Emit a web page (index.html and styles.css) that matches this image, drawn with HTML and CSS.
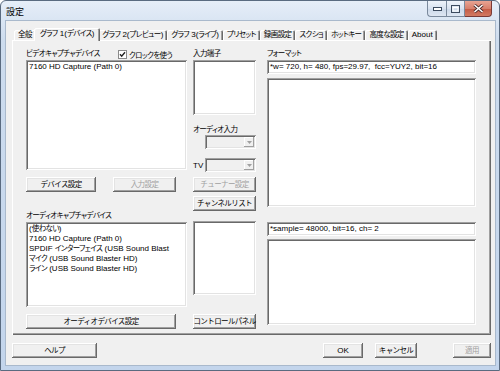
FILE: index.html
```html
<!DOCTYPE html>
<html lang="ja">
<head>
    <meta charset="UTF-8">
    <title>設定</title>
    <link rel="stylesheet" href="styles.css">
</head>
<body>
    <div class="window">
        <div class="titlebar">
            <span class="title">設定</span>
            <div class="caption">
                <span class="cap cap-min">
                    <svg width="9" height="4" viewBox="0 0 9 4"><rect x="0.5" y="0.5" width="8" height="3" fill="#fff" stroke="#3b4a5e"/></svg>
                </span>
                <span class="cap cap-max">
                    <svg width="9" height="8" viewBox="0 0 9 8"><rect x="0.5" y="0.5" width="8" height="7" fill="none" stroke="#3b4a5e"/><rect x="2" y="2.5" width="5" height="3.5" fill="none" stroke="#fff"/></svg>
                </span>
                <span class="cap cap-close">
                    <svg width="11" height="9" viewBox="0 0 11 9"><path d="M1.5 1 L9.5 8 M9.5 1 L1.5 8" stroke="#4a2a2a" stroke-width="3.2"/><path d="M1.5 1 L9.5 8 M9.5 1 L1.5 8" stroke="#fff" stroke-width="1.6"/></svg>
                </span>
            </div>
        </div>

        <div class="client">
            <div class="tabs">
                <span class="tab"><span class="ja">全般</span></span>
                <span class="tab active"><span class="ja">グラフ</span> 1(<span class="ja">デバイス</span>)</span>
                <span class="tab"><span class="ja">グラフ</span> 2(<span class="ja">プレビュー</span>)</span>
                <span class="tab"><span class="ja">グラフ</span> 3(<span class="ja">ライブ</span>)</span>
                <span class="tab"><span class="ja">プリセット</span></span>
                <span class="tab"><span class="ja">録画設定</span></span>
                <span class="tab"><span class="ja">スクショ</span></span>
                <span class="tab"><span class="ja">ホットキー</span></span>
                <span class="tab"><span class="ja">高度な設定</span></span>
                <span class="tab">About</span>
            </div>

            <div class="panel">
                <!-- 左: キャプチャデバイス -->
                <div class="col col-left">
                    <div class="head-row">
                        <span class="label ja">ビデオキャプチャデバイス</span>
                        <span class="check">
                            <svg class="check-box" width="9" height="9" viewBox="0 0 9 9">
                                <rect x="0.5" y="0.5" width="8" height="8" fill="#fff" stroke="#8a8a8a"/>
                                <path d="M2 4.2 L3.7 6.2 L7 2.2" fill="none" stroke="#222" stroke-width="1.4"/>
                            </svg>
                            <span class="ja">クロックを使う</span>
                        </span>
                    </div>
                    <div class="list sunken list-video">
                        <div class="item">7160 HD Capture (Path 0)</div>
                    </div>
                    <div class="btn-row">
                        <button class="btn btn-device ja">デバイス設定</button>
                        <button class="btn btn-input ja" disabled>入力設定</button>
                    </div>
                    <div class="label label-audio ja">オーディオキャプチャデバイス</div>
                    <div class="list sunken list-audio">
                        <div class="item">(<span class="ja">使わない</span>)</div>
                        <div class="item">7160 HD Capture (Path 0)</div>
                        <div class="item">SPDIF <span class="ja">インターフェイス</span> (USB Sound Blast</div>
                        <div class="item"><span class="ja">マイク</span> (USB Sound Blaster HD)</div>
                        <div class="item"><span class="ja">ライン</span> (USB Sound Blaster HD)</div>
                    </div>
                    <button class="btn btn-audio ja">オーディオデバイス設定</button>
                </div>

                <!-- 中: 入力端子 -->
                <div class="col col-mid">
                    <div class="label ja">入力端子</div>
                    <div class="list sunken list-pins"></div>
                    <div class="label label-ain ja">オーディオ入力</div>
                    <div class="combo sunken combo-ain">
                        <span class="combo-arrow"><svg width="5" height="3" viewBox="0 0 5 3"><path d="M0 0 H5 L2.5 3 Z" fill="#a0a0a0"/></svg></span>
                    </div>
                    <div class="tv-row">
                        <span class="tv-label">TV</span>
                        <div class="combo sunken">
                            <span class="combo-arrow"><svg width="5" height="3" viewBox="0 0 5 3"><path d="M0 0 H5 L2.5 3 Z" fill="#a0a0a0"/></svg></span>
                        </div>
                    </div>
                    <button class="btn btn-tuner ja" disabled>チューナー設定</button>
                    <button class="btn btn-channel ja">チャンネルリスト</button>
                    <div class="list sunken list-apins"></div>
                    <button class="btn btn-control ja">コントロールパネル</button>
                </div>

                <!-- 右: フォーマット -->
                <div class="col col-right">
                    <div class="label ja">フォーマット</div>
                    <div class="edit sunken">*w= 720, h= 480, fps=29.97,&nbsp; fcc=YUY2, bit=16</div>
                    <div class="list sunken list-vformat"></div>
                    <div class="edit sunken edit-audio">*sample= 48000, bit=16, ch= 2</div>
                    <div class="list sunken list-aformat"></div>
                </div>
            </div>

            <div class="footer">
                <button class="btn btn-help ja">ヘルプ</button>
                <button class="btn btn-ok">OK</button>
                <button class="btn btn-cancel ja">キャンセル</button>
                <button class="btn btn-apply ja" disabled>適用</button>
            </div>
        </div>
    </div>
</body>
</html>
```

FILE: styles.css
```css
* {
    box-sizing: border-box;
}

body {
    margin: 0;
    font-family: "Liberation Sans", "Noto Sans CJK JP", sans-serif;
    font-size: 8px;
    font-feature-settings: "palt";
    color: #000;
    background: #fff;
}

.window {
    width: 500px;
    height: 371px;
    display: flex;
    flex-direction: column;
    border: 1px solid #5a6b80;
    border-radius: 6px 6px 0 0;
    background: linear-gradient(#e6eef8, #cddcee 40px, #c3d5ec);
    padding: 0 4px 5px 5px;
}

.titlebar {
    height: 20px;
    display: flex;
    align-items: flex-start;
}

.title {
    font-size: 9px;
    line-height: 10px;
    margin-top: 6px;
}

.caption {
    margin-left: auto;
    margin-right: 3px;
    display: flex;
}

.cap {
    height: 16px;
    display: flex;
    align-items: center;
    justify-content: center;
    border: 1px solid #7a899c;
    border-top: none;
    background: linear-gradient(#eef3fa, #d8e2ef 50%, #cbd8e9 51%, #dde6f2);
}

.cap-min {
    width: 19px;
    border-radius: 0 0 0 4px;
    border-right: none;
}

.cap-max {
    width: 19px;
}

.cap-close {
    width: 27px;
    border-radius: 0 0 4px 0;
    border-left: none;
    border-color: #7a3a36;
    background: linear-gradient(#e8a493, #d7806c 50%, #c45a44 51%, #d27a62);
}

.client {
    flex: 1;
    display: flex;
    flex-direction: column;
    background: #f0f0f0;
    padding: 7px 4px 0 6px;
    box-shadow: 0 0 0 1px #a9b9cc;
}

/* タブ */
.tabs {
    height: 12px;
    display: flex;
    align-items: flex-end;
    padding-left: 2px;
}

.tab {
    height: 10px;
    line-height: 10px;
    padding: 0 4px;
    white-space: nowrap;
    background: #f0f0f0;
    border-radius: 2px 2px 0 0;
    box-shadow: inset 1px 1px #fff, inset -1px 0 #696969, inset -2px 0 #a0a0a0;
}

.tab.active {
    position: relative;
    z-index: 1;
    height: 13px;
    margin: 0 -2px -1px;
    padding: 1px 6px 0;
}

.panel {
    height: 295px;
    display: flex;
    padding: 8px 0 0 14px;
    box-shadow: inset 1px 1px #fff, inset -1px -1px #696969, inset -2px -2px #a0a0a0;
}

.col {
    display: flex;
    flex-direction: column;
}

.col-left {
    width: 161px;
}

.col-mid {
    width: 63px;
    margin-left: 6px;
}

.col-right {
    width: 209px;
    margin-left: 11px;
}

.label {
    line-height: 12px;
    white-space: nowrap;
}

.sunken {
    background: #fff;
    box-shadow: inset 1px 1px #a0a0a0, inset -1px -1px #fff, inset 2px 2px #696969, inset -2px -2px #e3e3e3;
}

.list {
    padding: 2px 3px;
    overflow: hidden;
}

.item {
    line-height: 10px;
    white-space: nowrap;
}

.btn {
    height: 15px;
    padding: 0;
    border: none;
    font-family: inherit;
    font-size: 8px;
    line-height: 14px;
    white-space: nowrap;
    color: #000;
    background: #f0f0f0;
    box-shadow: inset -1px -1px #696969, inset 1px 1px #fff, inset -2px -2px #a0a0a0, inset 2px 2px #e3e3e3;
}

.btn:disabled {
    color: #a0a0a0;
}

/* 左列 */
.head-row {
    height: 12px;
    display: grid;
    grid-template-columns: 92px auto;
    align-items: center;
}

.check {
    display: flex;
    align-items: center;
    gap: 2px;
    white-space: nowrap;
}

.list-video {
    height: 110px;
}

.btn-row {
    display: flex;
    margin-top: 7px;
}

.btn-device {
    width: 70px;
}

.btn-input {
    width: 63px;
    margin-left: 17px;
}

.label-audio {
    margin-top: 18px;
}

.list-audio {
    height: 85px;
}

.btn-audio {
    width: 150px;
    margin-top: 7px;
}

/* 中列 */
.list-pins {
    height: 55px;
}

.label-ain {
    margin-top: 10px;
    line-height: 10px;
}

.combo {
    width: 51px;
    height: 14px;
    background: #f0f0f0;
    display: flex;
    justify-content: flex-end;
    padding: 2px;
}

.combo-ain {
    margin-left: 12px;
}

.combo-arrow {
    width: 10px;
    display: flex;
    align-items: center;
    justify-content: center;
    box-shadow: inset -1px -1px #a0a0a0, inset 1px 1px #fff;
}

.tv-row {
    display: flex;
    align-items: center;
    margin-top: 9px;
}

.tv-label {
    width: 12px;
}

.btn-tuner {
    margin-top: 5px;
}

.btn-channel {
    margin-top: 4px;
}

.list-apins {
    height: 74px;
    margin-top: 10px;
}

.btn-control {
    margin-top: 19px;
}

/* 右列 */
.edit {
    height: 14px;
    line-height: 10px;
    padding: 2px 3px;
    white-space: nowrap;
}

.list-vformat {
    height: 129px;
    margin-top: 4px;
}

.edit-audio {
    margin-top: 15px;
}

.list-aformat {
    height: 86px;
    margin-top: 3px;
}

/* 下のボタン */
.footer {
    display: flex;
    margin-top: 8px;
}

.btn-help {
    width: 85px;
}

.btn-ok {
    width: 40px;
    margin-left: auto;
}

.btn-cancel {
    width: 42px;
    margin-left: 12px;
}

.btn-apply {
    width: 38px;
    margin-left: 36px;
}

/* 日本語部分は少し小さく詰める */
.ja {
    font-size: 7.5px;
    letter-spacing: -0.6px;
}
```
